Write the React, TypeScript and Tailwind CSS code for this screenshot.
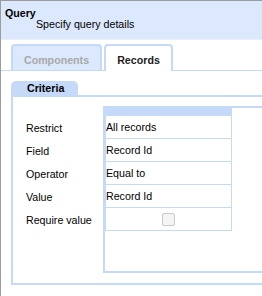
const rows = [
  { label: "Restrict", value: "All records" },
  { label: "Field", value: "Record Id" },
  { label: "Operator", value: "Equal to" },
  { label: "Value", value: "Record Id" },
  { label: "Require value", value: null },
]

const App = () => {
  return (
    <div className="w-[262px] h-[296px] overflow-hidden bg-white font-['Liberation_Sans',Arial,sans-serif] text-[10.67px] text-black">
      <div className="w-[320px] h-full border-l border-t border-[#9c9c9c]">
        {/* header */}
        <div className="h-[39px] bg-[#dce8fc] border-b border-[#e9f0fc] pt-[7px] pl-[4px] leading-[11px]">
          <div className="font-bold">Query</div>
          <div className="pl-[31px]">Specify query details</div>
        </div>

        {/* tabs */}
        <div className="mt-[4px] pl-[10px] flex items-end gap-[2px] border-b border-[#c5d9f8]">
          <div className="w-[91px] h-[26px] rounded-t-[4px] border-2 border-b-0 border-[#c5d9f8] bg-[#dce8fc] text-center pt-[8px] leading-[13px] font-bold text-[#a8a8a8]">
            Components
          </div>
          <div className="w-[69px] h-[27px] -mb-px rounded-t-[4px] border-2 border-b-0 border-[#c5d9f8] bg-white text-center pt-[8px] leading-[13px] font-bold text-[#222]">
            Records
          </div>
        </div>

        {/* criteria panel */}
        <div className="pt-[10px] pl-[10px]">
          <div className="w-[67px] h-[14px] rounded-t-[5px] bg-[#c5d9f8] pl-[16px] leading-[14px] font-bold">
            Criteria
          </div>
          <div className="border-l-2 border-t-2 border-b-2 border-[#c5d9f8] pt-[9px] pb-[10px] flex">
            <div className="w-[90px] pl-[13px] pt-[10px]">
              {rows.map((r) => (
                <div key={r.label} className="h-[23px] flex items-center">
                  {r.label}
                </div>
              ))}
            </div>
            <div className="flex-1 h-[167px] border-l-2 border-t-2 border-b-2 border-[#c5d9f8]">
              <div className="w-[127px] border-l border-r border-[#c5d9f8]">
                <div className="h-[8px] bg-[#c5d9f8]" />
                {rows.map((r) => (
                  <div
                    key={r.label}
                    className="h-[23px] border-b border-[#c5d9f8] flex items-center"
                  >
                    {r.value !== null ? (
                      <span>{r.value}</span>
                    ) : (
                      <div className="w-full flex justify-center">
                        <div className="w-[13px] h-[13px] rounded-[2px] border border-[#c9c9c9] bg-[#f4f4f4]" />
                      </div>
                    )}
                  </div>
                ))}
              </div>
            </div>
          </div>
        </div>
      </div>
    </div>
  )
}

export default App
